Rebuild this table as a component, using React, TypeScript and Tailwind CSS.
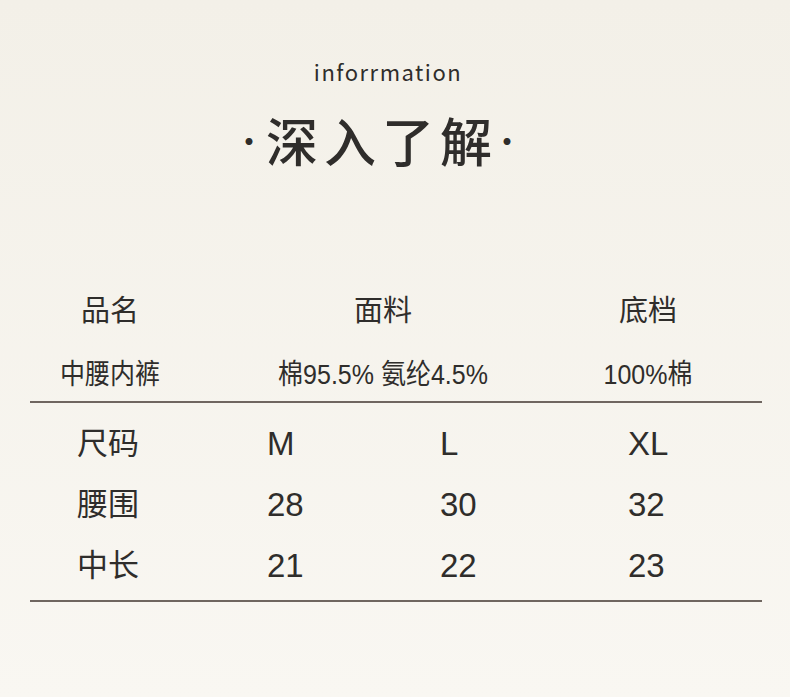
const cjk = { fontFamily: '"Noto Sans CJK SC", "Noto Sans", sans-serif' };
const latin = { fontFamily: '"Liberation Sans", "Noto Sans CJK SC", sans-serif' };

const sizes = [
  ["尺码", "M", "L", "XL"],
  ["腰围", "28", "30", "32"],
  ["中长", "21", "22", "23"],
];

export default function App() {
  return (
    <div
      className="w-[790px] h-[697px] flex flex-col text-[#2f2d2b] bg-gradient-to-b from-[#f3f0e8] to-[#f9f7f2]"
      style={cjk}
    >
      {/* heading */}
      <div className="pt-[56px] flex flex-col items-center">
        <div className="text-[22px] leading-[30px] tracking-[1.5px] mr-[14px]">inforrmation</div>
        <div className="mt-[21px] mr-[34px] flex items-center text-[52px] leading-[66px] font-medium">
          <span className="text-[30px] mr-[2px]">·</span>
          <div className="flex gap-[6px]">
            {["深", "入", "了", "解"].map((c) => (
              <span key={c}>{c}</span>
            ))}
          </div>
          <span className="text-[30px]">·</span>
        </div>
      </div>

      {/* product info */}
      <div className="mx-[30px] mt-[115px]">
        <div className="grid grid-cols-[160px_386px_144px] text-[29px] leading-[40px]">
          <div className="text-center">品名</div>
          <div className="text-center">面料</div>
          <div className="text-center">底档</div>
        </div>
        <div
          className="grid grid-cols-[160px_386px_144px] text-[25px] leading-[30px] mt-[31px] scale-y-[1.12]"
          style={latin}
        >
          <div className="text-center">中腰内裤</div>
          <div className="text-center">棉95.5% 氨纶4.5%</div>
          <div className="text-center">100%棉</div>
        </div>
        <div className="mt-[12px] h-[2px] w-[732px] bg-[#6f6660]" />

        {/* size table */}
        <div className="pt-[20px] pb-[13px] flex flex-col gap-[19px]" style={latin}>
          {sizes.map((row) => (
            <div
              key={row[0]}
              className="grid grid-cols-[190px_173px_188px_1fr] items-center pl-[47px] leading-[42px]"
            >
              {row.map((cell, i) => (
                <div key={i} className={i === 0 ? "text-[31px]" : "text-[33px]"}>
                  {cell}
                </div>
              ))}
            </div>
          ))}
        </div>
        <div className="h-[2px] w-[732px] bg-[#6f6660]" />
      </div>
    </div>
  );
}
